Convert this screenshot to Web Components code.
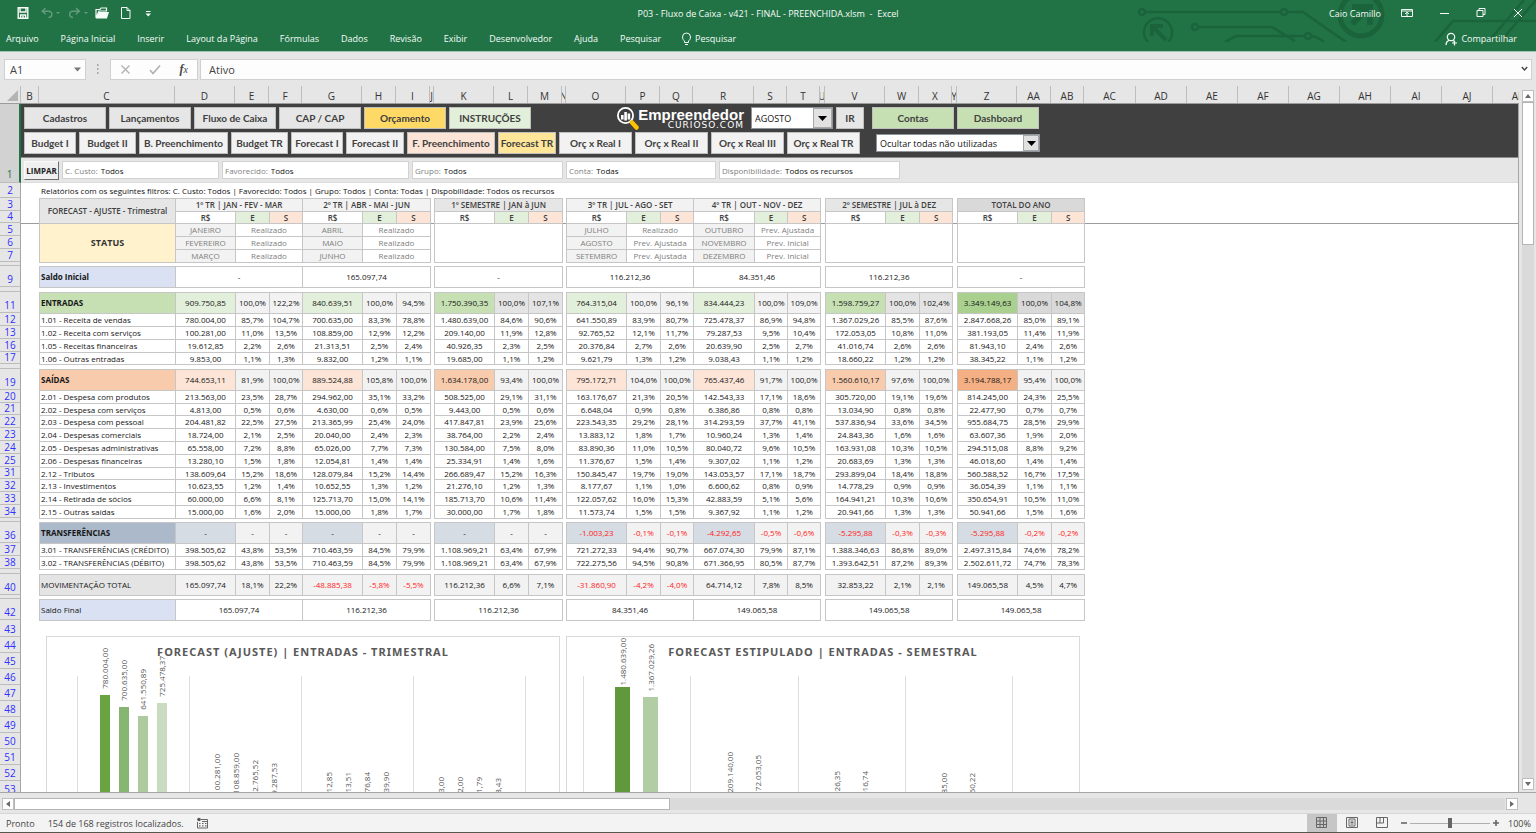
<!DOCTYPE html>
<html lang="pt-BR">
<head>
<meta charset="utf-8">
<title>P03 - Fluxo de Caixa - v421 - FINAL - PREENCHIDA.xlsm - Excel</title>
<style>
  html, body { height: 100%; margin: 0; }
  body { --ui: "Open Sans", "Noto Sans", sans-serif; --cell: "Open Sans", "Noto Sans", sans-serif; font-family: var(--ui); overflow: hidden; }
</style>
</head>
<body>
<excel-app></excel-app>

<script>
/* ---------- sheet geometry ---------- */
const COLS = [['B',18],['C',136],['D',60],['E',34],['F',33],['G',60],['H',34],['I',34],['J',4],['K',60],['L',34],['M',34],['N',4],
  ['O',60],['P',34],['Q',33],['R',61],['S',33],['T',33],['U',5],['V',60],['W',34],['X',33],['Y',5],['Z',60],['AA',34],['AB',33],
  ['AC',52],['AD',51],['AE',51],['AF',51],['AG',51],['AH',51],['AI',51],['AJ',51],['AK',51]];
const ROWS = [[1,79],[2,15],[3,13],[4,12],[5,13],[6,13],[7,13],[8,4],[9,21],[10,5],[11,21],[12,13],[13,13],[16,13],[17,12],[18,5],
  [19,21],[20,13],[21,12],[22,13],[23,13],[24,13],[25,13],[31,12],[32,13],[33,13],[34,13],[35,4],[36,21],[37,13],[38,13],[39,5],
  [40,21],[41,4],[42,21],[43,17],[44,16],[45,16],[46,16],[47,16],[48,16],[49,16],[50,16],[51,16],[52,16],[53,16]];
const H = Object.fromEntries(ROWS);
const TABLE_COLS = COLS.slice(1, 27);
const TABLE_WIDTH = TABLE_COLS.reduce((s, c) => s + c[1], 0);
const COLGROUP = '<colgroup>' + TABLE_COLS.map(c => `<col style="width:${c[1]}px">`).join('') + '</colgroup>';
/* a narrow spacer column follows these groups */
const GAP_AFTER = new Set([1, 2, 4, 5]);

/* ---------- report data: seven groups of R$ / E / S ---------- */
const DATA = {
  11: ['ENTRADAS', '909.750,85 100,0% 122,2% 840.639,51 100,0% 94,5% 1.750.390,35 100,0% 107,1% 764.315,04 100,0% 96,1% 834.444,23 100,0% 109,0% 1.598.759,27 100,0% 102,4% 3.349.149,63 100,0% 104,8%'],
  12: ['1.01 - Receita de vendas', '780.004,00 85,7% 104,7% 700.635,00 83,3% 78,8% 1.480.639,00 84,6% 90,6% 641.550,89 83,9% 80,7% 725.478,37 86,9% 94,8% 1.367.029,26 85,5% 87,6% 2.847.668,26 85,0% 89,1%'],
  13: ['1.02 - Receita com serviços', '100.281,00 11,0% 13,5% 108.859,00 12,9% 12,2% 209.140,00 11,9% 12,8% 92.765,52 12,1% 11,7% 79.287,53 9,5% 10,4% 172.053,05 10,8% 11,0% 381.193,05 11,4% 11,9%'],
  16: ['1.05 - Receitas financeiras', '19.612,85 2,2% 2,6% 21.313,51 2,5% 2,4% 40.926,35 2,3% 2,5% 20.376,84 2,7% 2,6% 20.639,90 2,5% 2,7% 41.016,74 2,6% 2,6% 81.943,10 2,4% 2,6%'],
  17: ['1.06 - Outras entradas', '9.853,00 1,1% 1,3% 9.832,00 1,2% 1,1% 19.685,00 1,1% 1,2% 9.621,79 1,3% 1,2% 9.038,43 1,1% 1,2% 18.660,22 1,2% 1,2% 38.345,22 1,1% 1,2%'],
  19: ['SAÍDAS', '744.653,11 81,9% 100,0% 889.524,88 105,8% 100,0% 1.634.178,00 93,4% 100,0% 795.172,71 104,0% 100,0% 765.437,46 91,7% 100,0% 1.560.610,17 97,6% 100,0% 3.194.788,17 95,4% 100,0%'],
  20: ['2.01 - Despesa com produtos', '213.563,00 23,5% 28,7% 294.962,00 35,1% 33,2% 508.525,00 29,1% 31,1% 163.176,67 21,3% 20,5% 142.543,33 17,1% 18,6% 305.720,00 19,1% 19,6% 814.245,00 24,3% 25,5%'],
  21: ['2.02 - Despesa com serviços', '4.813,00 0,5% 0,6% 4.630,00 0,6% 0,5% 9.443,00 0,5% 0,6% 6.648,04 0,9% 0,8% 6.386,86 0,8% 0,8% 13.034,90 0,8% 0,8% 22.477,90 0,7% 0,7%'],
  22: ['2.03 - Despesa com pessoal', '204.481,82 22,5% 27,5% 213.365,99 25,4% 24,0% 417.847,81 23,9% 25,6% 223.543,35 29,2% 28,1% 314.293,59 37,7% 41,1% 537.836,94 33,6% 34,5% 955.684,75 28,5% 29,9%'],
  23: ['2.04 - Despesas comerciais', '18.724,00 2,1% 2,5% 20.040,00 2,4% 2,3% 38.764,00 2,2% 2,4% 13.883,12 1,8% 1,7% 10.960,24 1,3% 1,4% 24.843,36 1,6% 1,6% 63.607,36 1,9% 2,0%'],
  24: ['2.05 - Despesas administrativas', '65.558,00 7,2% 8,8% 65.026,00 7,7% 7,3% 130.584,00 7,5% 8,0% 83.890,36 11,0% 10,5% 80.040,72 9,6% 10,5% 163.931,08 10,3% 10,5% 294.515,08 8,8% 9,2%'],
  25: ['2.06 - Despesas financeiras', '13.280,10 1,5% 1,8% 12.054,81 1,4% 1,4% 25.334,91 1,4% 1,6% 11.376,67 1,5% 1,4% 9.307,02 1,1% 1,2% 20.683,69 1,3% 1,3% 46.018,60 1,4% 1,4%'],
  31: ['2.12 - Tributos', '138.609,64 15,2% 18,6% 128.079,84 15,2% 14,4% 266.689,47 15,2% 16,3% 150.845,47 19,7% 19,0% 143.053,57 17,1% 18,7% 293.899,04 18,4% 18,8% 560.588,52 16,7% 17,5%'],
  32: ['2.13 - Investimentos', '10.623,55 1,2% 1,4% 10.652,55 1,3% 1,2% 21.276,10 1,2% 1,3% 8.177,67 1,1% 1,0% 6.600,62 0,8% 0,9% 14.778,29 0,9% 0,9% 36.054,39 1,1% 1,1%'],
  33: ['2.14 - Retirada de sócios', '60.000,00 6,6% 8,1% 125.713,70 15,0% 14,1% 185.713,70 10,6% 11,4% 122.057,62 16,0% 15,3% 42.883,59 5,1% 5,6% 164.941,21 10,3% 10,6% 350.654,91 10,5% 11,0%'],
  34: ['2.15 - Outras saídas', '15.000,00 1,6% 2,0% 15.000,00 1,8% 1,7% 30.000,00 1,7% 1,8% 11.573,74 1,5% 1,5% 9.367,92 1,1% 1,2% 20.941,66 1,3% 1,3% 50.941,66 1,5% 1,6%'],
  36: ['TRANSFERÊNCIAS', '- - - - - - - - - -1.003,23 -0,1% -0,1% -4.292,65 -0,5% -0,6% -5.295,88 -0,3% -0,3% -5.295,88 -0,2% -0,2%'],
  37: ['3.01 - TRANSFERÊNCIAS (CRÉDITO)', '398.505,62 43,8% 53,5% 710.463,59 84,5% 79,9% 1.108.969,21 63,4% 67,9% 721.272,33 94,4% 90,7% 667.074,30 79,9% 87,1% 1.388.346,63 86,8% 89,0% 2.497.315,84 74,6% 78,2%'],
  38: ['3.02 - TRANSFERÊNCIAS (DÉBITO)', '398.505,62 43,8% 53,5% 710.463,59 84,5% 79,9% 1.108.969,21 63,4% 67,9% 722.275,56 94,5% 90,8% 671.366,95 80,5% 87,7% 1.393.642,51 87,2% 89,3% 2.502.611,72 74,7% 78,3%'],
  40: ['MOVIMENTAÇÃO TOTAL', '165.097,74 18,1% 22,2% -48.885,38 -5,8% -5,5% 116.212,36 6,6% 7,1% -31.860,90 -4,2% -4,0% 64.714,12 7,8% 8,5% 32.853,22 2,1% 2,1% 149.065,58 4,5% 4,7%'],
};
const BALANCES = {
  9: ['Saldo Inicial', ['-', '165.097,74', '-', '116.212,36', '84.351,46', '116.212,36', '-']],
  42: ['Saldo Final', ['165.097,74', '116.212,36', '116.212,36', '84.351,46', '149.065,58', '149.065,58', '149.065,58']],
};
const STATUS = {
  5: [['JANEIRO','Realizado'],['ABRIL','Realizado'],['JULHO','Realizado'],['OUTUBRO','Prev. Ajustada']],
  6: [['FEVEREIRO','Realizado'],['MAIO','Realizado'],['AGOSTO','Prev. Ajustada'],['NOVEMBRO','Prev. Inicial']],
  7: [['MARÇO','Realizado'],['JUNHO','Realizado'],['SETEMBRO','Prev. Ajustada'],['DEZEMBRO','Prev. Inicial']],
};
/* fills per band: label, then value fill and percentage fill for quarter / semester / year groups */
const KIND = ['q', 'q', 's', 'q', 'q', 's', 'y'];
const FILLS = {
  11: { label: '#c6e0b4', q: ['#e2efda', '#f2f2f2'], s: ['#c6e0b4', '#e4e4e4'], y: ['#a9d08e', '#d9d9d9'] },
  19: { label: '#f8cbad', q: ['#fce4d6', '#f2f2f2'], s: ['#f8cbad', '#f2f2f2'], y: ['#f4b084', '#f2f2f2'] },
  36: { label: '#acb9ca', q: ['#d6dce4', '#f2f2f2'], s: ['#d6dce4', '#f2f2f2'], y: ['#d6dce4', '#f2f2f2'] },
  40: { label: '#e4e4e4', q: ['#f2f2f2', '#f2f2f2'], s: ['#f2f2f2', '#f2f2f2'], y: ['#f2f2f2', '#f2f2f2'] },
};

const tableCss = `
  table { border-collapse: collapse; table-layout: fixed; width: ${TABLE_WIDTH}px; }
  td, th { padding: 0; height: inherit; border: 1px solid #c6c6c6; text-align: center; font-weight: 400; line-height: 10px; white-space: nowrap; overflow: hidden; }
  .gap, .void td { border-top: 0; border-bottom: 0; }
  .void td { border-left: 0; border-right: 0; }
  .name { text-align: left; padding-left: 1px; }
`;

/* Base for every part: subclasses give css and html, and fill the open shadow root once. */
class Part extends HTMLElement {
  constructor() { super(); this.attachShadow({ mode: 'open' }); }
  connectedCallback() {
    this.shadowRoot.innerHTML = `<style>:host,*{box-sizing:border-box}${this.css()}</style>${this.html()}`;
  }
  css() { return ':host{display:block}'; }
  html() { return '<slot></slot>'; }
}

customElements.define('title-bar', class extends Part {
  css() { return `
    :host { display: grid; grid-template-columns: 1fr auto 1fr; align-items: center; height: 26px; color: #f6fbf8; font-size: 9px; }
    div { display: flex; align-items: center; }
    .quick { padding-left: 17px; }
    .win { justify-content: flex-end; padding-right: 13px; }
    button { display: block; border: 0; padding: 0; background: none; color: inherit; height: 14px; }
    svg { display: block; fill: none; stroke: currentColor; }
    h1 { margin: 0; font-size: 9px; font-weight: 500; white-space: pre; }
    .off { opacity: .3; }
    .name { margin-right: 20px; font-weight: 500; }
    .win button + button { margin-left: 27px; }`; }
  html() { return `
    <div class="quick">
      <button aria-label="Salvar"><svg width="14" height="14" viewBox="0 0 14 14" stroke-width="1.4"><path d="M1.2 1.7h9.6v10.6H1.2zM3 2v4h6V2M3.6 12V9h5v3M6 10v2"/></svg></button>
      <button class="off" aria-label="Desfazer" style="margin-left:10px"><svg width="22" height="14" viewBox="0 0 22 14" stroke-width="1.4"><path d="M4.500 2L1.200 5.200l3.500 3M1.500 5.200h6c5 0 4 6.300 0 6.300"/><path d="M15 6h4l-2 2z" fill="currentColor" stroke="none"/></svg></button>
      <button class="off" aria-label="Refazer" style="margin-left:4px"><svg width="22" height="14" viewBox="0 0 22 14" stroke-width="1.4"><path d="M9 2l3.300 3.200-3.500 3M12 5.200H6c-5 0-4 6.300 0 6.300"/><path d="M17 6h4l-2 2z" fill="currentColor" stroke="none"/></svg></button>
      <button aria-label="Abrir" style="margin-left:6px"><svg width="15" height="14" viewBox="0 0 15 14"><path d="M1 12V3.500h4l1-1.500h5.500v3H4z" stroke-width="1.200"/><path d="M3.800 6H14l-2 6.500H1z" fill="currentColor" stroke="none"/></svg></button>
      <button aria-label="Novo" style="margin-left:10px"><svg width="12" height="14" viewBox="0 0 12 14"><path d="M1.500 1.500h5.500l3 3v8h-8.500zM7 1.500v3h3"/></svg></button>
      <button aria-label="Personalizar" style="margin-left:12px"><svg width="8" height="14" viewBox="0 0 8 14"><path d="M2 5.500h4.500"/><path d="M1.500 7.500h5.500l-2.700 3z" fill="currentColor" stroke="none"/></svg></button>
    </div>
    <h1>P03 - Fluxo de Caixa - v421 - FINAL - PREENCHIDA.xlsm  -  Excel</h1>
    <div class="win">
      <span class="name">Caio Camillo</span>
      <button aria-label="Opções da faixa"><svg width="12" height="14" viewBox="0 0 12 14"><path d="M.500 3.500h11v7H.500zM.500 5h11M6 10V6.500M4 8l2-1.800L8 8"/></svg></button>
      <button aria-label="Minimizar"><svg width="9" height="14" viewBox="0 0 9 14"><path d="M0 7.500h9"/></svg></button>
      <button aria-label="Restaurar"><svg width="10" height="14" viewBox="0 0 10 14"><path d="M1 4.500h6v6H1zM3 4.500V2.500h6v6H7"/></svg></button>
      <button aria-label="Fechar"><svg width="10" height="14" viewBox="0 0 10 14"><path d="M1 3l8 8M9 3l-8 8"/></svg></button>
    </div>`; }
});

customElements.define('ribbon-tabs', class extends Part {
  css() { return `
    :host { display: flex; align-items: center; height: 25px; padding: 0 19px 0 6px; color: #f6fbf8; font-size: 9px; font-weight: 500; }
    a { color: inherit; text-decoration: none; margin-right: 22px; white-space: nowrap; }
    a:first-child { margin-right: 15px; }
    .search { margin-right: 20px; }
    .tell, .share { display: flex; align-items: center; gap: 3px; margin-right: 0; }
    .share { margin-left: auto; }
    svg { fill: none; stroke: currentColor; }`; }
  html() { return ['Arquivo','Página Inicial','Inserir','Layout da Página','Fórmulas','Dados','Revisão','Exibir','Desenvolvedor','Ajuda']
      .map(t => `<a href="#">${t}</a>`).join('') + `
    <a href="#" class="search">Pesquisar</a>
    <a href="#" class="tell"><svg width="11" height="14" viewBox="0 0 11 14"><path d="M3.500 10.500V9C2.500 8 1.500 7 1.500 5a4 4 0 0 1 8 0c0 2-1 3-2 4v1.500zM4 12.500h3"/></svg>Pesquisar</a>
    <a href="#" class="share"><svg width="13" height="14" viewBox="0 0 13 14" stroke-width="1.200"><circle cx="6" cy="5" r="3.700"/><path d="M1 13c0-3 1.500-4 3-4.700M7.500 8.500l2 1M9.500 8.500v5M7 11h5"/></svg>Compartilhar</a>`; }
});

customElements.define('app-header', class extends Part {
  css() { return `
    :host { display: block; position: relative; flex: none; background: #217346; border-bottom: 1px solid #9fc8b0; }
    .art { position: absolute; right: 0; top: 0; fill: none; stroke: #1b633b; stroke-width: 2.500; }
    title-bar, ribbon-tabs { position: relative; }`; }
  html() { return `
    <svg class="art" width="400" height="42" viewBox="0 0 400 42" aria-hidden="true">
      <circle cx="6" cy="12" r="3"/><path d="M9 12h136M151 12h16l43 30"/><circle cx="148" cy="12" r="3"/>
      <circle cx="59" cy="27" r="3"/><path d="M62 27h74l23 14M89 42l11-6h68M175 36c5 0 9 3 13 6"/><circle cx="172" cy="36" r="3"/>
      <path d="M12 42a14 14 0 1 1 20 0"/><path d="M30 40L17 27M16 36V26h11" stroke-width="4"/>
      <circle cx="225" cy="15" r="21" stroke-width="5"/><path d="M216 24l14-14M216 7h18v18" stroke-width="6"/>
      <path d="M299 42l18-21h83M352 42L388 0M364 42L400 0"/>
    </svg>
    <title-bar></title-bar><ribbon-tabs></ribbon-tabs>`; }
});

customElements.define('formula-bar', class extends Part {
  css() { return `
    :host { display: flex; align-items: center; flex: none; height: 34px; padding: 0 4px; background: #e6e6e6; color: #444; font-size: 11px; }
    .box { display: flex; align-items: center; height: 21px; background: #fdfdfd; border: 1px solid #d0d0d0; }
    .ref { width: 82px; padding-right: 4px; }
    input { flex: 1; min-width: 0; border: 0; padding: 0 0 0 5px; background: none; font: inherit; color: inherit; outline: 0; }
    .dots { margin: 0 10px 0 9px; }
    .fx { width: 88px; justify-content: space-between; padding: 0 9px; margin-right: 2px; }
    .text { flex: 1; padding: 0 3px; }
    button { border: 0; padding: 0; background: none; color: #b0b0b0; font: italic 12px "Liberation Serif", serif; }
    svg { display: block; fill: none; stroke: currentColor; }`; }
  html() { return `
    <div class="box ref"><input aria-label="Caixa de nome" value="A1"><svg width="7" height="5" viewBox="0 0 7 5"><path d="M0 .500h7L3.500 4.500z" fill="#777" stroke="none"/></svg></div>
    <svg class="dots" width="5" height="12" viewBox="0 0 5 12" stroke="none"><path d="M2 1h1.500v2H2zM2 5h1.500v2H2zM2 9h1.500v2H2z" fill="#a8a8a8" stroke="none"/></svg>
    <div class="box fx">
      <button aria-label="Cancelar"><svg width="11" height="11" viewBox="0 0 11 11" stroke-width="1.300"><path d="M1.500 1.500l8 8M9.500 1.500l-8 8"/></svg></button>
      <button aria-label="Inserir"><svg width="12" height="11" viewBox="0 0 12 11" stroke-width="1.600"><path d="M1 6l3 3.500L11 1.500"/></svg></button>
      <button aria-label="Inserir função" style="color:#444"><b>f</b><small>x</small></button>
    </div>
    <div class="box text"><input aria-label="Barra de fórmulas" value="Ativo"><svg width="7" height="6" viewBox="0 0 7 6" stroke="#555" stroke-width="1.400"><path d="M.800 1l2.700 3L6.200 1"/></svg></div>`; }
});

customElements.define('column-headers', class extends Part {
  css() { return `
    :host { display: flex; flex: none; height: 18px; overflow: hidden; background: #e6e6e6; border-bottom: 1px solid #9c9c9c; color: #333; font-size: 10px; line-height: 20px; }
    span { flex: none; display: flex; justify-content: center; overflow: hidden; border-right: 1px solid #bdbdbd; }
    .all { width: 21px; align-items: flex-end; justify-content: flex-end; padding: 0 2px 2px 0; }`; }
  html() { return `<span class="all"><svg width="11" height="11" viewBox="0 0 11 11"><path d="M11 0v11H0z" fill="#b4b4b4"/></svg></span>` +
      COLS.map(([n, w]) => `<span style="width:${w}px">${n}</span>`).join(''); }
});

/* Rows that are almost closed are too low to carry their number. */
customElements.define('row-headers', class extends Part {
  css() { return `
    :host { display: block; flex: none; width: 21px; background: #e6e6e6; color: #3030ff; font-size: 10px; font-weight: 500; line-height: 11px; overflow: hidden; }
    div { display: flex; align-items: flex-end; justify-content: center; border-bottom: 1px solid #bcbcbc; border-right: 1px solid #a6a6a6; }
    .tall { line-height: 13px; }
    .on { background: #d2d2d2; border-right: 2px solid #217346; color: #217346; line-height: 16px; }`; }
  html() { return ROWS.map(([n, h]) => `<div class="${n === 1 ? 'on' : h > 13 ? 'tall' : ''}" style="height:${h}px">${h > 5 ? n : ''}</div>`).join(''); }
});

customElements.define('nav-button', class extends Part {
  css() { return `
    :host { display: block; flex: none; height: 22px; }
    button { display: block; width: 100%; height: 100%; padding: 0; border: 1px solid var(--edge, #bfbfbf); background: var(--fill, #f2f2f2); color: #404040; font: 700 10px Lato, sans-serif; white-space: nowrap; }`; }
  html() { return '<button><slot></slot></button>'; }
});

customElements.define('form-combo', class extends Part {
  css() { return `
    :host { display: flex; flex: none; background: #fff; border: 1px solid #8f949c; }
    select { flex: 1; min-width: 0; appearance: none; border: 0; padding: 0 0 0 3px; background: none; color: #111; font: 9px var(--ui); }
    span { display: flex; align-items: center; justify-content: center; width: var(--arrow, 19px); background: #e1e1e1; border: 1px solid #a8a8a8; }`; }
  html() { return `<select aria-label="${this.getAttribute('label')}"><option>${this.getAttribute('value')}</option></select>
    <span aria-hidden="true"><svg width="9" height="5" viewBox="0 0 9 5"><path d="M0 0h9L4.500 5z"/></svg></span>`; }
});

customElements.define('brand-logo', class extends Part {
  css() { return `
    :host { display: flex; flex: none; width: 128px; color: #fff; }
    svg { flex: none; margin-right: -4px; }
    div { display: flex; flex-direction: column; align-items: flex-end; flex: 1; padding-top: 1px; }
    b { font: 700 15px/15px "Liberation Sans", Arial, sans-serif; }
    small { font: 9px/7px "DejaVu Sans", sans-serif; letter-spacing: 1px; }`; }
  html() { return `
    <svg width="24" height="24" viewBox="0 0 24 24" fill="none">
      <circle cx="9.500" cy="9.500" r="7.600" stroke="#fff" stroke-width="1.800"/>
      <path d="M5 9h2.600v4.500H5zM8.300 6h2.600v8.500H8.300zM11.600 7.500h2.600v6h-2.600z" fill="#fff"/>
      <path d="M14.500 15l2 2" stroke="#fff" stroke-width="2"/><path d="M16 16.500l4.500 5" stroke="#ffc000" stroke-width="4.500" stroke-linecap="round"/>
    </svg>
    <div><b>Empreendedor</b><small>CURIOSO.COM</small></div>`; }
});

customElements.define('report-nav', class extends Part {
  css() { return `
    :host { display: flex; flex-direction: column; gap: 3px; height: 54px; padding: 3px 0 0 3px; background: #404040; border-bottom: 1px solid #8c8c8c; }
    nav { display: flex; gap: 3px; height: 22px; align-items: center; }
    .top nav-button { width: 82px; --fill: #e6e6e6; }`; }
  html() {
    const low = [['Budget I',52],['Budget II',57],['B. Preenchimento',89],['Budget TR',57],['Forecast I',52],['Forecast II',58],['F. Preenchimento',88,'#fce4d6'],['Forecast TR',58,'#ffe699'],
      ['Orç x Real I',73],['Orç x Real II',73],['Orç x Real III',73],['Orç x Real TR',73]];
    return `
    <nav class="top">
      <nav-button>Cadastros</nav-button><nav-button>Lançamentos</nav-button><nav-button>Fluxo de Caixa</nav-button><nav-button>CAP / CAP</nav-button>
      <nav-button style="--fill:#ffd966">Orçamento</nav-button><nav-button style="--fill:#e2efda">INSTRUÇÕES</nav-button>
      <brand-logo style="margin-left:82px"></brand-logo>
      <form-combo label="Mês" value="AGOSTO" style="margin-left:4px;width:82px;height:22px"></form-combo>
      <nav-button style="width:28px">IR</nav-button>
      <nav-button style="margin-left:5px;--fill:#c6e0b4">Contas</nav-button><nav-button style="--fill:#c6e0b4">Dashboard</nav-button>
    </nav>
    <nav>${low.map(([t, w, f]) => `<nav-button style="width:${w}px${f ? ';--fill:' + f : ''}">${t}</nav-button>`).join('')}
      <form-combo label="Contas exibidas" value="Ocultar todas não utilizadas" style="margin-left:13px;width:164px;height:18px;--arrow:16px"></form-combo>
    </nav>`; }
});

customElements.define('filter-field', class extends Part {
  css() { return `
    :host { display: block; flex: none; height: 18px; background: #fff; border: 1px solid #d2d2d2; font-size: 8px; }
    label { display: flex; align-items: center; height: 100%; padding-left: 2px; color: #808080; gap: 3px; }
    input { flex: 1; min-width: 0; border: 0; padding: 0; background: none; color: #111; font: inherit; font-weight: 500; }`; }
  html() { return `<label>${this.getAttribute('label')}:<input readonly value="${this.getAttribute('value')}"></label>`; }
});

customElements.define('filter-bar', class extends Part {
  css() { return `
    :host { display: flex; align-items: center; gap: 3px; height: 25px; padding-left: 3px; background: #e6e6e6; border-bottom: 1px solid #dcdcdc; }
    button { width: 35px; height: 19px; padding: 0; border: 1px solid #fafafa; border-right-color: #6e6e6e; border-bottom-color: #6e6e6e; background: #f0f0f0; color: #222; font: 700 8px var(--ui); }`; }
  html() { return `<button>LIMPAR</button>` +
      [['C. Custo','Todos',157],['Favorecido','Todos',187],['Grupo','Todos',151],['Conta','Todas',150],['Disponibilidade','Todos os recursos',181]]
      .map(([l, v, w]) => `<filter-field label="${l}" value="${v}" style="width:${w}px"></filter-field>`).join(''); }
});

customElements.define('forecast-head', class extends Part {
  css() { return `
    :host { display: block; padding-left: 18px; color: #404040; font: 8px var(--cell); }
    p { margin: 0; padding-left: 2px; height: 15px; line-height: 15px; color: #111; white-space: nowrap; }
    ${tableCss}
    th { font-weight: 600; }`; }
  html() {
    const heads = ['1º TR | JAN - FEV - MAR','2º TR | ABR - MAI - JUN','1º SEMESTRE | JAN à JUN','3º TR | JUL - AGO - SET','4º TR | OUT - NOV - DEZ','2º SEMESTRE | JUL à DEZ','TOTAL DO ANO'];
    const fill = { q: '#f2f2f2', s: '#e6e6e6', y: '#d9d9d9' };
    const gap = i => GAP_AFTER.has(i) ? '<td class="gap"></td>' : '';
    return `<p>Relatórios com os seguintes filtros: C. Custo: Todos | Favorecido: Todos | Grupo: Todos | Conta: Todas | Dispobilidade: Todos os recursos</p>
    <table>${COLGROUP}<thead>
      <tr style="height:${H[3]}px"><th rowspan="2" style="background:#e6e6e6">FORECAST - AJUSTE - Trimestral</th>${heads.map((t, i) => `<th colspan="3" style="background:${fill[KIND[i]]}">${t}</th>${gap(i)}`).join('')}</tr>
      <tr style="height:${H[4]}px">${heads.map((t, i) => `<th>R$</th><th style="background:#e2efda">E</th><th style="background:#fce4d6">S</th>${gap(i)}`).join('')}</tr>
    </thead></table>`; }
});

customElements.define('forecast-table', class extends Part {
  css() { return `
    :host { display: block; padding-left: 18px; color: #161616; font: 8px var(--cell); }
    ${tableCss}
    .neg { color: #f22; }
    .state { color: #808080; }
    .band .name { font-weight: 700; }
    .status { font-size: 9px; font-weight: 700; color: #333; }`; }
  html() {
    const gap = i => GAP_AFTER.has(i) ? '<td class="gap"></td>' : '';
    const row = (n) => {
      const tr = (body, cls = '') => `<tr class="${cls}" style="height:${H[n]}px">${body}</tr>`;
      if (STATUS[n]) {
        let q = 0;
        return tr((n === 5 ? '<th class="status" rowspan="3" style="background:#fff2cc">STATUS</th>' : '') + KIND.map((k, i) => {
          if (k !== 'q') return (n === 5 ? '<td colspan="3" rowspan="3"></td>' : '') + gap(i);
          const [m, s] = STATUS[n][q++];
          return `<td class="state" style="background:#f2f2f2">${m}</td><td class="state" colspan="2">${s}</td>${gap(i)}`;
        }).join(''));
      }
      if (BALANCES[n]) {
        const [name, vals] = BALANCES[n];
        return tr(`<th class="name" style="background:#d9e1f2">${name}</th>` + vals.map((v, i) => `<td colspan="3">${v}</td>${gap(i)}`).join(''), n === 9 ? 'band' : '');
      }
      if (DATA[n]) {
        const [name, list] = DATA[n], v = list.split(' '), f = FILLS[n];
        return tr(`<th class="name"${f ? ` style="background:${f.label}"` : ''}>${name}</th>` + KIND.map((k, i) => [0, 1, 2].map(j => {
          const t = v[i * 3 + j], bg = f ? ` style="background:${f[k][j ? 1 : 0]}"` : '';
          return `<td${t.length > 1 && t[0] === '-' ? ' class="neg"' : ''}${bg}>${t}</td>`;
        }).join('') + gap(i)).join(''), f && n !== 40 ? 'band' : '');
      }
      return tr('<td colspan="26"></td>', 'void');
    };
    return `<table>${COLGROUP}<tbody>${ROWS.filter(([n]) => n >= 5 && n <= 42).map(([n]) => row(n)).join('')}</tbody></table>`; }
});

/* Column chart: value labels stand above each bar, bars scale to the axis maximum. */
customElements.define('bar-chart', class extends Part {
  css() { return `
    :host { display: block; height: 220px; background: #fff; border: 1px solid #d9d9d9; font-family: var(--cell); }
    h2 { margin: 0; height: 39px; text-align: center; font: 700 11px/30px "Noto Sans", sans-serif; letter-spacing: 1px; color: #595959; white-space: nowrap; }
    .plot { display: flex; height: 141px; margin: 0 var(--right) 0 var(--left); border-right: 1px solid #dedede; }
    .cat { flex: 1; display: flex; justify-content: center; gap: var(--gap); padding-right: 1px; border-left: 1px solid #dedede; }
    .col { display: flex; flex-direction: column; justify-content: flex-end; align-items: center; width: var(--bar); }
    .col span { writing-mode: vertical-rl; transform: rotate(180deg); flex: none; margin-bottom: 6px; font-size: 8px; line-height: 10px; color: #555; }
    .col .near { margin-bottom: 2px; }
    .col i { flex: none; width: 100%; }`; }
  html() {
    const max = +this.getAttribute('max'), colors = this.getAttribute('colors').split(' ');
    const cats = this.getAttribute('values').split('/').map(c => c.trim().split(' '));
    const num = t => +t.replaceAll('.', '').replace(',', '.');
    return `<h2>${this.getAttribute('heading')}</h2><div class="plot">${cats.map(c => `<div class="cat">${c.map((t, i) =>
      `<div class="col"><span class="${num(t) / max > .9 ? 'near' : ''}">${t}</span><i style="height:${Math.round(num(t) / max * 141)}px;background:${colors[i]}"></i></div>`).join('')}</div>`).join('')}</div>`; }
});

customElements.define('sheet-view', class extends Part {
  css() { return `
    :host { display: block; flex: 1; min-width: 0; overflow: hidden; background: #fff; border-right: 1px solid #a6a6a6; }
    .frozen { position: relative; z-index: 1; height: ${H[1] + H[2] + H[3] + H[4]}px; box-shadow: 0 1px 0 #9c9c9c; }
    .charts { display: flex; gap: 6px; padding: 15px 0 0 25px; }
    bar-chart { flex: none; width: 514px; }`; }
  html() { return `
    <div class="frozen"><report-nav></report-nav><filter-bar></filter-bar><forecast-head></forecast-head></div>
    <forecast-table></forecast-table>
    <div class="charts">
      <bar-chart style="--left:30px;--right:33px;--bar:10px;--gap:9px" heading="FORECAST (AJUSTE) | ENTRADAS - TRIMESTRAL" max="900000" colors="#6aa442 #87b673 #adcb9f #c9dcc0"
        values="780.004,00 700.635,00 641.550,89 725.478,37 / 100.281,00 108.859,00 92.765,52 79.287,53 / 19.612,85 21.313,51 20.376,84 20.639,90 / 9.853,00 9.832,00 9.621,79 9.038,43"></bar-chart>
      <bar-chart style="--left:16px;--right:66px;--bar:15px;--gap:13px" heading="FORECAST ESTIPULADO | ENTRADAS - SEMESTRAL" max="1600000" colors="#62983c #b0cda3"
        values="1.480.639,00 1.367.029,26 / 209.140,00 172.053,05 / 40.926,35 41.016,74 / 19.685,00 18.660,22"></bar-chart>
    </div>`; }
});

const scrollCss = `
  button { flex: none; display: flex; align-items: center; justify-content: center; width: 12px; height: 12px; padding: 0; border: 1px solid #bfbfbf; background: #fff; }
  .track { flex: 1; display: flex; background: #dadada; }
  .thumb { background: #fff; border: 1px solid #b4b4b4; }
  svg { fill: #6a6a6a; }`;

customElements.define('v-scroll', class extends Part {
  css() { return `:host { display: flex; flex-direction: column; align-items: center; flex: none; width: 17px; padding: 4px 0 2px; background: #e6e6e6; }${scrollCss}
    .thumb { width: 12px; height: 143px; }`; }
  html() { return `<button aria-label="Acima"><svg width="6" height="4" viewBox="0 0 6 4"><path d="M0 4h6L3 0z"/></svg></button>
    <div class="track"><div class="thumb"></div></div>
    <button aria-label="Abaixo"><svg width="6" height="4" viewBox="0 0 6 4"><path d="M0 0h6L3 4z"/></svg></button>`; }
});
customElements.define('h-scroll', class extends Part {
  css() { return `:host { display: flex; align-items: center; flex: none; height: 21px; padding: 1px 18px 0 2px; background: #e6e6e6; border-top: 1px solid #a6a6a6; }${scrollCss}
    .track { height: 12px; margin-right: 1px; } .thumb { width: 44%; }`; }
  html() { return `<button aria-label="Esquerda"><svg width="4" height="6" viewBox="0 0 4 6"><path d="M4 0v6L0 3z"/></svg></button>
    <div class="track"><div class="thumb"></div></div>
    <button aria-label="Direita"><svg width="4" height="6" viewBox="0 0 4 6"><path d="M0 0v6l4-3z"/></svg></button>`; }
});

customElements.define('status-bar', class extends Part {
  css() { return `
    :host { display: flex; align-items: center; flex: none; height: 20px; padding: 0 6px; background: #f3f3f3; border-top: 1px solid #d6d6d6; border-bottom: 1px solid #55564e; color: #444; font-size: 9px; }
    .msg { margin: 0 13px; }
    svg { display: block; fill: none; stroke: #666; }
    button { display: flex; align-items: center; justify-content: center; align-self: stretch; width: 30px; border: 0; padding: 0; background: none; }
    .views { display: flex; align-self: stretch; margin-left: auto; margin-right: 3px; }
    .on { background: #c6c6c6; }
    .z { width: 8px; }
    input { appearance: none; width: 80px; height: 12px; margin: 0 2px; background: linear-gradient(#b0b0b0, #b0b0b0) center / 100% 1px no-repeat; }
    input::-webkit-slider-thumb { appearance: none; width: 4px; height: 10px; background: #666; }
    output { margin-left: 8px; width: 22px; }`; }
  html() { return `
    <span>Pronto</span><span class="msg">154 de 168 registros localizados.</span>
    <svg width="11" height="12" viewBox="0 0 11 12"><path d="M4 2.500h6.500v8.500H.500V5"/><path d="M2 6.500h1.500M5 6.500h1.500M8 6.500h1.500M2 8.800h1.500M5 8.800h1.500M8 8.800h1.500M5 4.500h5" stroke-width="1.200"/><circle cx="2" cy="2.500" r="1.800" fill="#555" stroke="none"/></svg>
    <div class="views">
      <button class="on" aria-label="Normal"><svg width="12" height="12" viewBox="0 0 12 12"><path d="M.500.500h10v10H.500zM.500 4h10M.500 7.500h10M4 .500v10M7.500.500v10"/></svg></button>
      <button aria-label="Layout da página"><svg width="12" height="12" viewBox="0 0 12 12"><path d="M.500.500h11v10H.500zM3 2h6v7H3zM4.500 4h3M4.500 5.500h3M4.500 7h3"/></svg></button>
      <button aria-label="Quebra de página"><svg width="12" height="12" viewBox="0 0 12 12"><path d="M.500.500h11v10H.500zM.500 6h7V.500M4 .500V6"/></svg></button>
    </div>
    <button class="z" aria-label="Reduzir"><svg width="6" height="6" viewBox="0 0 6 6" stroke-width="1.600"><path d="M0 3h6"/></svg></button>
    <input type="range" aria-label="Zoom" value="50">
    <button class="z" aria-label="Ampliar"><svg width="6" height="6" viewBox="0 0 6 6" stroke-width="1.600"><path d="M0 3h6M3 0v6"/></svg></button>
    <output>100%</output>`; }
});

customElements.define('excel-app', class extends Part {
  css() { return `
    :host { display: flex; flex-direction: column; height: 100vh; }
    .work { flex: 1; min-height: 0; display: flex; }
    .grid { flex: 1; min-width: 0; display: flex; flex-direction: column; }
    .body { flex: 1; min-height: 0; display: flex; }`; }
  html() { return `
    <app-header></app-header><formula-bar></formula-bar>
    <div class="work">
      <div class="grid"><column-headers></column-headers><div class="body"><row-headers></row-headers><sheet-view></sheet-view></div></div>
      <v-scroll></v-scroll>
    </div>
    <h-scroll></h-scroll><status-bar></status-bar>`; }
});
</script>
</body>
</html>
